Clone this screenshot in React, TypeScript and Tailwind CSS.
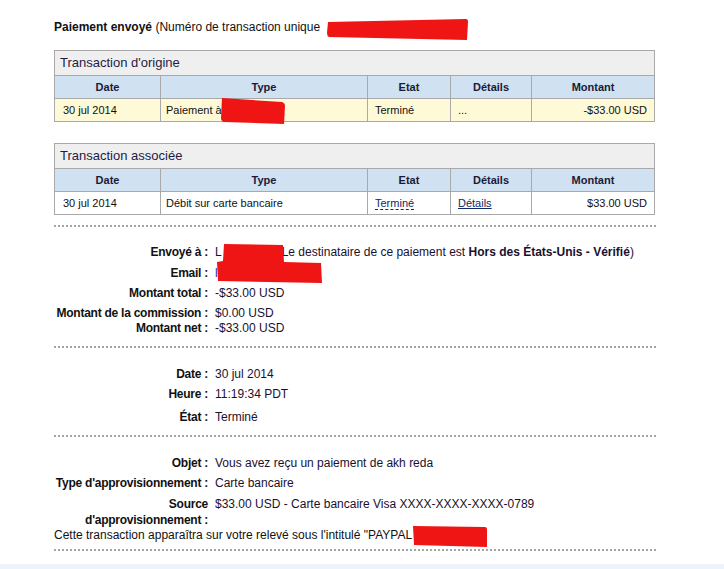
import React from "react";

type Row = {
  date: string;
  type: React.ReactNode;
  etat: React.ReactNode;
  details: React.ReactNode;
  montant: string;
};

function TxTable({ title, row, yellow }: { title: string; row: Row; yellow?: boolean }) {
  return (
    <table className="w-[600px] table-fixed border-collapse text-[11px]">
      <colgroup>
        <col className="w-[106px]" />
        <col className="w-[207px]" />
        <col className="w-[83px]" />
        <col className="w-[81px]" />
        <col className="w-[123px]" />
      </colgroup>
      <thead>
        <tr>
          <td colSpan={5} className="h-[25px] border border-[#a9a9a9] bg-[#efefef] px-[5px] text-[13px] text-[#1f1b47]">
            {title}
          </td>
        </tr>
        <tr className="bg-[#d0e1f1] text-[#1a1a38]">
          <th className="h-[23px] border border-[#a9a9a9] text-center font-bold">Date</th>
          <th className="border border-[#a9a9a9] text-center font-bold">Type</th>
          <th className="border border-[#a9a9a9] text-center font-bold">Etat</th>
          <th className="border border-[#a9a9a9] text-center font-bold">Détails</th>
          <th className="border border-[#a9a9a9] text-center font-bold">Montant</th>
        </tr>
      </thead>
      <tbody>
        <tr className={yellow ? "bg-[#fef9d6]" : "bg-white"}>
          <td className="h-[23px] border border-[#a9a9a9] pl-[8px]">{row.date}</td>
          <td className="border border-[#a9a9a9] pl-[5px]">{row.type}</td>
          <td className="border border-[#a9a9a9] pl-[7px]">{row.etat}</td>
          <td className="border border-[#a9a9a9] pl-[7px]">{row.details}</td>
          <td className="border border-[#a9a9a9] pr-[7px] text-right">{row.montant}</td>
        </tr>
      </tbody>
    </table>
  );
}

function Field({ label, children, className = "" }: { label: React.ReactNode; children?: React.ReactNode; className?: string }) {
  return (
    <div className={"flex " + className}>
      <div className="w-[154px] shrink-0 text-right font-bold tracking-[-0.25px] text-[#111]">{label}</div>
      <div className="pl-[7px] text-[#1a1030]">{children}</div>
    </div>
  );
}

const Dots = ({ className = "" }: { className?: string }) => (
  <div className={"w-[602px] border-t-2 border-dotted border-[#a5a5a5] " + className} />
);

export default function App() {
  return (
    <div className="relative flex h-[569px] w-[724px] flex-col overflow-hidden bg-white font-['Liberation_Sans',Arial,sans-serif] text-[12px] text-[#111]">
      <div className="pl-[54px] pt-[20px]">
        <div className="leading-[15px]">
          <span className="font-bold">Paiement envoyé</span> (Numéro de transaction unique
        </div>

        <div className="mt-[15px]">
          <TxTable
            title="Transaction d'origine"
            yellow
            row={{ date: "30 jul 2014", type: "Paiement à", etat: "Terminé", details: "...", montant: "-$33.00 USD" }}
          />
        </div>

        <div className="mt-[21px]">
          <TxTable
            title="Transaction associée"
            row={{
              date: "30 jul 2014",
              type: "Débit sur carte bancaire",
              etat: <span className="border-b border-dashed border-[#0d2a66] text-[#0d2a66]">Terminé</span>,
              details: <span className="text-[#0d2a66] underline">Détails</span>,
              montant: "$33.00 USD",
            }}
          />
        </div>

        <Dots className="mt-[10px]" />

        <div className="leading-[15px]">
          <Field label="Envoyé à :" className="mt-[18px]">
            <span className="whitespace-nowrap">
              L<span className="inline-block w-[60px]" />Le destinataire de ce paiement est{" "}
              <span className="font-bold">Hors des États-Unis - Vérifié</span>)
            </span>
          </Field>
          <Field label="Email :" className="mt-[6px]">
            <span className="text-[#4b1d8a]">l</span>
          </Field>
          <Field label="Montant total :" className="mt-[5px]">-$33.00 USD</Field>
          <Field label="Montant de la commission :" className="mt-[5px]">$0.00 USD</Field>
          <Field label="Montant net :">-$33.00 USD</Field>
        </div>

        <Dots className="mt-[10px]" />

        <div className="leading-[15px]">
          <Field label="Date :" className="mt-[19px]">30 jul 2014</Field>
          <Field label="Heure :" className="mt-[5px]">11:19:34 PDT</Field>
          <Field label="État :" className="mt-[8px]">Terminé</Field>
        </div>

        <Dots className="mt-[10px]" />

        <div className="leading-[15px]">
          <Field label="Objet :" className="mt-[19px]">Vous avez reçu un paiement de akh reda</Field>
          <Field label="Type d'approvisionnement :" className="mt-[5px]">Carte bancaire</Field>
          <Field label="Source d'approvisionnement :" className="mt-[5px] leading-[16px]">
            <span className="whitespace-nowrap">$33.00 USD - Carte bancaire Visa XXXX-XXXX-XXXX-0789</span>
          </Field>
          <div className="whitespace-nowrap">Cette transaction apparaîtra sur votre relevé sous l'intitulé "PAYPAL</div>
        </div>

        <Dots className="mt-[6px]" />
      </div>

      <div className="mt-auto h-[5px] w-full bg-[#eef3fb]" />

      {/* red redaction marks drawn over the text */}
      <svg className="absolute left-[327px] top-[18px]" width="141" height="24" viewBox="0 0 141 24">
        <path d="M1 4 L139 1 Q141 1 141 4 L140 22 L2 19 Q0 18 0 15 Z" fill="#ef1515" />
      </svg>
      <svg className="absolute left-[221px] top-[97px]" width="65" height="28" viewBox="0 0 65 28">
        <path d="M1 1 L61 5 Q64 6 64 9 L63 27 L3 25 Q0 24 0 21 Z" fill="#ef1515" />
      </svg>
      <svg className="absolute left-[216px] top-[243px]" width="107" height="41" viewBox="0 0 107 41">
        <path d="M8 1 L67 2 L68 19 L105 20 L106 40 L2 38 L1 19 L7 18 Z" fill="#ef1515" />
      </svg>
      <svg className="absolute left-[413px] top-[525px]" width="75" height="23" viewBox="0 0 75 23">
        <path d="M0 1 L72 2 Q74 2 74 5 L74 22 L1 20 Z" fill="#ef1515" />
      </svg>
    </div>
  );
}
